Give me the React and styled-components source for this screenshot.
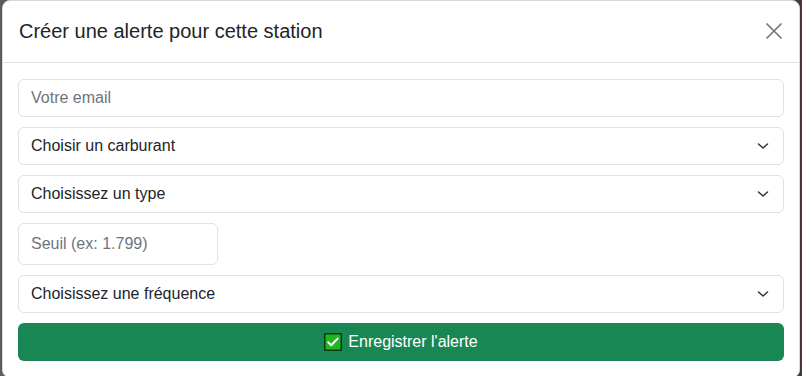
import React from "react"
import styled, { createGlobalStyle } from "styled-components"

const GlobalStyle = createGlobalStyle`
  * { box-sizing: border-box; }
  html, body {
    margin: 0;
    padding: 0;
    background: #4a4444;
    overflow: hidden;
  }
  body {
    font-family: "Liberation Sans", Arial, sans-serif;
  }
`

const Backdrop = styled.div`
  width: 802px;
  height: 376px;
  background: linear-gradient(90deg, #5c5c5c 0, #5c5c5c 50%, #4b3636 50%);
  overflow: hidden;
`

const Modal = styled.div`
  margin-left: 2px;
  width: 798px;
  background: #fff;
  border-radius: 8px;
  border: 1px solid #d8d8d8;
`

const Header = styled.div`
  display: flex;
  align-items: center;
  justify-content: space-between;
  padding: 15px 16px 16px 16px;
  border-bottom: 1px solid #dee2e6;
`

const Title = styled.h5`
  margin: 0;
  font-size: 20px;
  font-weight: 400;
  line-height: 30px;
  color: #212529;
`

const Close = styled.button`
  width: 20px;
  height: 20px;
  padding: 0;
  margin-right: -1px;
  border: 0;
  background: transparent;
  display: flex;
  align-items: center;
  justify-content: center;
  cursor: pointer;
`

const Body = styled.div`
  padding: 16px 15px 16px 15px;
  display: flex;
  flex-direction: column;
  gap: 10px;
`

const Field = styled.div`
  position: relative;
  width: ${(p) => p.$width || "100%"};
  height: ${(p) => p.$height || 38}px;
  border: 1px solid #dee2e6;
  border-radius: 6px;
  display: flex;
  align-items: center;
  padding: 0 12px;
  font-size: 16px;
  color: ${(p) => (p.$placeholder ? "#6c757d" : "#212529")};
`

const Chevron = styled.svg`
  position: absolute;
  right: 13px;
  top: 50%;
  transform: translateY(-50%);
`

const SaveButton = styled.button`
  height: 38px;
  width: 100%;
  border: 0;
  border-radius: 6px;
  background: #198754;
  color: #fff;
  font-family: inherit;
  font-size: 16px;
  display: flex;
  align-items: center;
  justify-content: center;
  gap: 6px;
  cursor: pointer;
`

const ChevronIcon = () => (
  <Chevron width="14" height="14" viewBox="0 0 14 14">
    <path d="M2.5 5l4.5 4 4.5-4" fill="none" stroke="#343a40" strokeWidth="1.6" strokeLinecap="round" strokeLinejoin="round" />
  </Chevron>
)

const Select = ({ children }) => (
  <Field>
    {children}
    <ChevronIcon />
  </Field>
)

const CheckEmoji = () => (
  <svg width="18" height="18" viewBox="0 0 18 18">
    <rect x="0.75" y="0.75" width="16.5" height="16.5" fill="#22b422" stroke="#0b3d12" strokeWidth="1.5" />
    <path d="M4.2 9.2l3 3 6.4-6.6" fill="none" stroke="#fff" strokeWidth="2" strokeLinecap="round" strokeLinejoin="round" />
  </svg>
)

export default function App() {
  return (
    <>
      <GlobalStyle />
      <Backdrop>
        <Modal>
          <Header>
            <Title>Créer une alerte pour cette station</Title>
            <Close aria-label="Fermer">
              <svg width="18" height="18" viewBox="0 0 18 18">
                <path d="M1.5 1.5l15 15M16.5 1.5l-15 15" stroke="#777" strokeWidth="1.7" />
              </svg>
            </Close>
          </Header>
          <Body>
            <Field $placeholder>Votre email</Field>
            <Select>Choisir un carburant</Select>
            <Select>Choisissez un type</Select>
            <Field $placeholder $width="200px" $height={42}>Seuil (ex: 1.799)</Field>
            <Select>Choisissez une fréquence</Select>
            <SaveButton>
              <CheckEmoji />
              Enregistrer l'alerte
            </SaveButton>
          </Body>
        </Modal>
      </Backdrop>
    </>
  )
}
